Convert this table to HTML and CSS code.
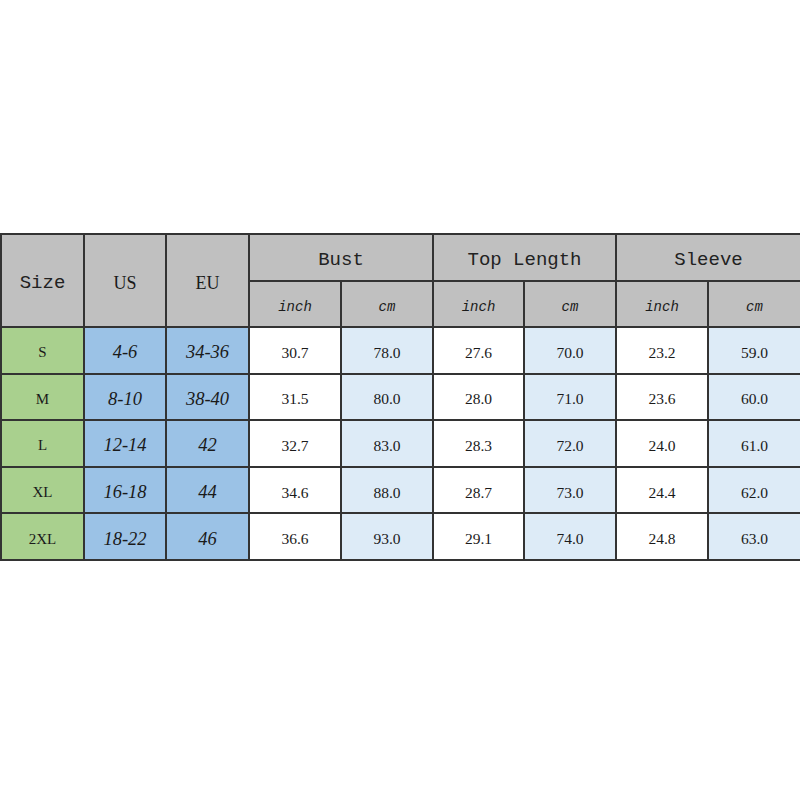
FILE: index.html
```html
<!DOCTYPE html>
<html>
<head>
<meta charset="utf-8">
<link rel="stylesheet" href="styles.css">
</head>
<body>
<div class="page">
<table class="chart">
<colgroup>
<col class="c1"><col class="c2"><col class="c3"><col class="c4"><col class="c5"><col class="c6"><col class="c7"><col class="c8"><col class="c9">
</colgroup>
<thead>
<tr class="h1">
<th rowspan="2" class="hd mono">Size</th>
<th rowspan="2" class="hd serif">US</th>
<th rowspan="2" class="hd serif">EU</th>
<th colspan="2" class="hd mono">Bust</th>
<th colspan="2" class="hd mono">Top Length</th>
<th colspan="2" class="hd mono">Sleeve</th>
</tr>
<tr class="h2">
<th class="hd unit">inch</th><th class="hd unit">cm</th>
<th class="hd unit">inch</th><th class="hd unit">cm</th>
<th class="hd unit">inch</th><th class="hd unit">cm</th>
</tr>
</thead>
<tbody>
<tr><td class="sz">S</td><td class="us">4-6</td><td class="us">34-36</td><td>30.7</td><td class="lt">78.0</td><td>27.6</td><td class="lt">70.0</td><td>23.2</td><td class="lt">59.0</td></tr>
<tr><td class="sz">M</td><td class="us">8-10</td><td class="us">38-40</td><td>31.5</td><td class="lt">80.0</td><td>28.0</td><td class="lt">71.0</td><td>23.6</td><td class="lt">60.0</td></tr>
<tr><td class="sz">L</td><td class="us">12-14</td><td class="us">42</td><td>32.7</td><td class="lt">83.0</td><td>28.3</td><td class="lt">72.0</td><td>24.0</td><td class="lt">61.0</td></tr>
<tr><td class="sz">XL</td><td class="us">16-18</td><td class="us">44</td><td>34.6</td><td class="lt">88.0</td><td>28.7</td><td class="lt">73.0</td><td>24.4</td><td class="lt">62.0</td></tr>
<tr><td class="sz">2XL</td><td class="us">18-22</td><td class="us">46</td><td>36.6</td><td class="lt">93.0</td><td>29.1</td><td class="lt">74.0</td><td>24.8</td><td class="lt">63.0</td></tr>
</tbody>
</table>
</div>
</body>
</html>
```

FILE: styles.css
```css
html, body {
  margin: 0;
  padding: 0;
  background: #ffffff;
}
.page {
  padding-top: 233px;
}
.chart {
  width: 800px;
  border-collapse: collapse;
  table-layout: fixed;
  font-family: "Liberation Serif", serif;
  color: #1a1a1a;
}
.c1 { width: 83px; }
.c2 { width: 82px; }
.c3 { width: 83px; }
.c4 { width: 92px; }
.c5 { width: 92px; }
.c6 { width: 91px; }
.c7 { width: 92px; }
.c8 { width: 92px; }
.c9 { width: 93px; }
.chart th, .chart td {
  border: 2px solid #333333;
  text-align: center;
  vertical-align: middle;
  padding: 5px 0 0 0;
}
.h1 { height: 47px; }
.h2 { height: 46px; }
.chart tbody tr { height: 46.6px; }
.hd {
  background: #c0c0c0;
  font-weight: normal;
}
.mono {
  font-family: "Liberation Mono", monospace;
  font-size: 19px;
  color: #222;
}
.serif {
  font-family: "Liberation Serif", serif;
  font-size: 18px;
}
.unit {
  font-family: "Liberation Mono", monospace;
  font-style: italic;
  font-size: 14px;
}
.sz {
  background: #a9d08e;
}
.us {
  background: #9bc2e6;
  font-style: italic;
}
.chart tbody td {
  font-size: 15.5px;
}
.chart tbody td.us { font-size: 18.5px; }
.chart tbody td.sz { font-size: 15px; }
.lt {
  background: #ddebf7;
}
```
